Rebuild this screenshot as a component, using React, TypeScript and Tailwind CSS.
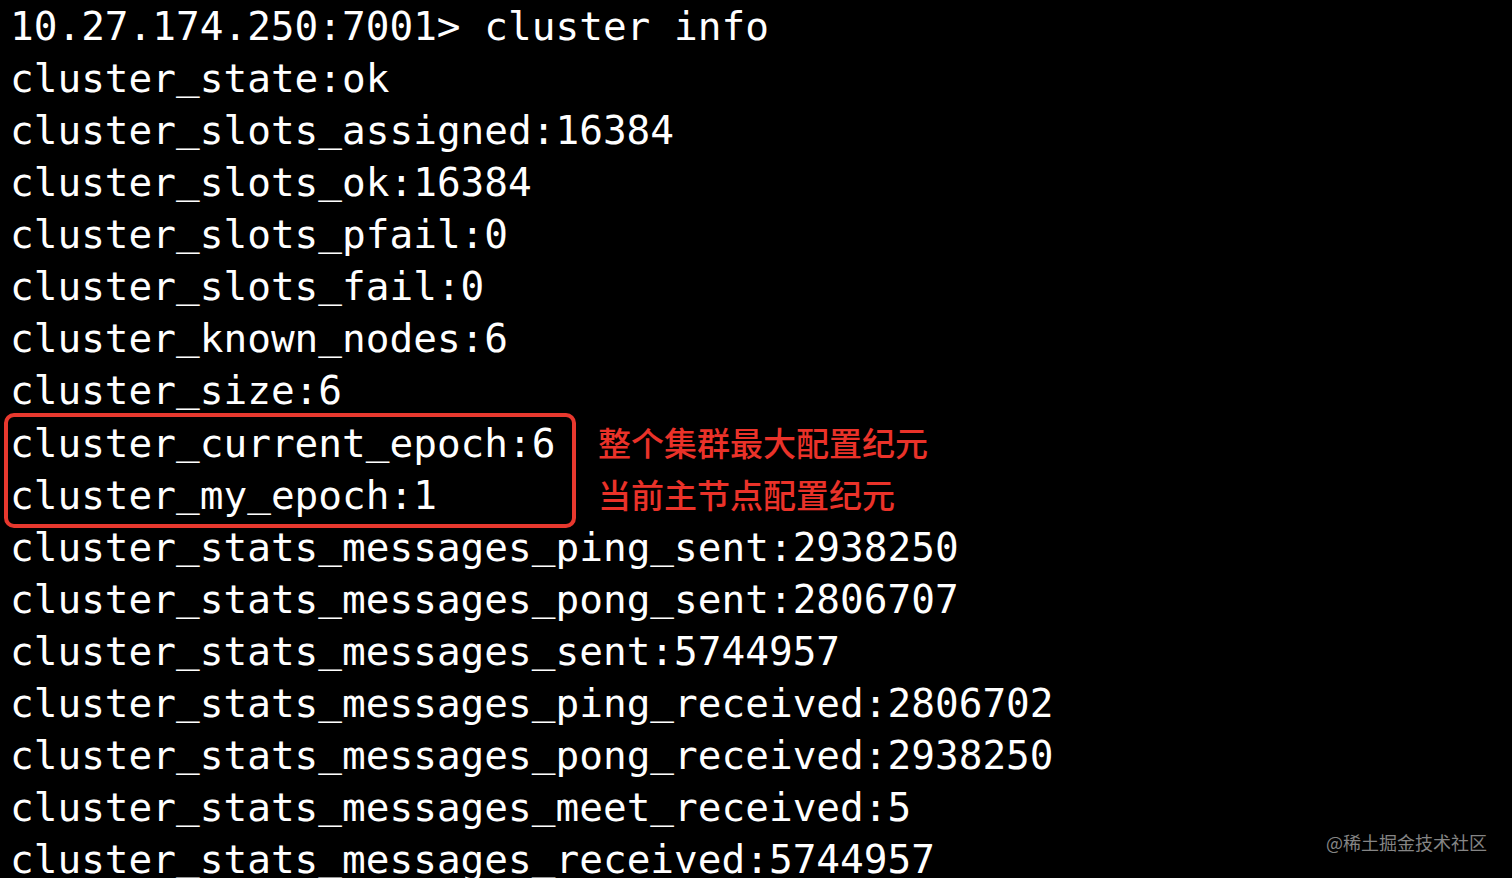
const before = [
  "10.27.174.250:7001> cluster info",
  "cluster_state:ok",
  "cluster_slots_assigned:16384",
  "cluster_slots_ok:16384",
  "cluster_slots_pfail:0",
  "cluster_slots_fail:0",
  "cluster_known_nodes:6",
  "cluster_size:6",
];

const boxed = ["cluster_current_epoch:6", "cluster_my_epoch:1"];
const notes = ["整个集群最大配置纪元", "当前主节点配置纪元"];

const after = [
  "cluster_stats_messages_ping_sent:2938250",
  "cluster_stats_messages_pong_sent:2806707",
  "cluster_stats_messages_sent:5744957",
  "cluster_stats_messages_ping_received:2806702",
  "cluster_stats_messages_pong_received:2938250",
  "cluster_stats_messages_meet_received:5",
  "cluster_stats_messages_received:5744957",
];

// underscores sit a little higher in the terminal font than in DejaVu
function Line({ text }: { text: string }) {
  const parts = text.split("_");
  return (
    <div className="leading-[52px]">
      {parts.map((p, i) => (
        <span key={i}>
          {i > 0 && <span className="inline-block -translate-y-[3px]">_</span>}
          {p}
        </span>
      ))}
    </div>
  );
}

export default function App() {
  return (
    <div className="relative h-[878px] w-full overflow-hidden bg-black">
      <div className="pl-[10px] font-['DejaVu_Sans_Mono',monospace] text-[39.4px] text-white">
        {before.map((t) => (
          <Line key={t} text={t} />
        ))}

        {/* highlighted epoch lines + notes */}
        <div className="flex items-start">
          <div className="-mt-[3px] -mb-[7px] -ml-[6px] w-[572px] rounded-[10px] border-[4px] border-[#e8382e] pl-[2px] pb-[3px]">
            {boxed.map((t) => (
              <Line key={t} text={t} />
            ))}
          </div>
          <div className="ml-[22px] font-['Noto_Sans_CJK_SC',sans-serif] text-[33px] font-medium text-[#ea3229]">
            {notes.map((t) => (
              <div key={t} className="leading-[52px]">
                {t}
              </div>
            ))}
          </div>
        </div>

        {after.map((t) => (
          <Line key={t} text={t} />
        ))}
      </div>

      <div className="absolute left-[1326px] top-[829px] font-['Noto_Sans_CJK_SC',sans-serif] text-[18px] leading-[26px] text-[#858585]">
        @稀土掘金技术社区
      </div>
    </div>
  );
}
